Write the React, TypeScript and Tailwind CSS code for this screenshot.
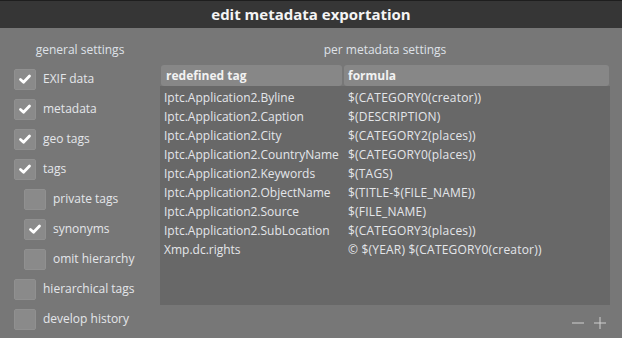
import React from "react";

const Check = () => (
  <svg width="14" height="12" viewBox="0 0 14 12">
    <polyline points="2.5,6.5 5.5,9.2 11.5,3" fill="none" stroke="#ffffff" strokeWidth="2.8" strokeLinecap="round" strokeLinejoin="round" />
  </svg>
);

const Row = ({ label, checked, indent }: { label: string; checked: boolean; indent?: boolean }) => (
  <div className={`h-[30px] flex items-center ${indent ? "pl-[24px]" : "pl-[14px]"}`}>
    <div className="w-[22px] h-[21px] rounded-[2px] bg-[#8a8a8a] border border-[#909090] flex items-center justify-center">
      {checked && <Check />}
    </div>
    <span className="ml-[7px] text-[12px] text-[#e4e6ea]">{label}</span>
  </div>
);

const rows: [string, string][] = [
  ["Iptc.Application2.Byline", "$(CATEGORY0(creator))"],
  ["Iptc.Application2.Caption", "$(DESCRIPTION)"],
  ["Iptc.Application2.City", "$(CATEGORY2(places))"],
  ["Iptc.Application2.CountryName", "$(CATEGORY0(places))"],
  ["Iptc.Application2.Keywords", "$(TAGS)"],
  ["Iptc.Application2.ObjectName", "$(TITLE-$(FILE_NAME))"],
  ["Iptc.Application2.Source", "$(FILE_NAME)"],
  ["Iptc.Application2.SubLocation", "$(CATEGORY3(places))"],
  ["Xmp.dc.rights", "© $(YEAR) $(CATEGORY0(creator))"],
];

export default function App() {
  return (
    <div
      className="w-[622px] h-[338px] bg-[#777777] flex flex-col overflow-hidden"
      style={{ fontFamily: '"Open Sans", "Noto Sans", sans-serif' }}
    >
      <div className="h-[28px] bg-[#363636] border-t border-[#1e1e1e] flex items-center justify-center">
        <span className="text-[15px] font-bold text-[#f4f4f4] leading-none">edit metadata exportation</span>
      </div>
      <div className="flex flex-1">
        <div className="w-[160px] flex flex-col pt-[13px]">
          <div className="h-[18px] flex items-center justify-center text-[12px] text-[#dfe2e8]">general settings</div>
          <div className="mt-[5px]">
            <Row label="EXIF data" checked />
            <Row label="metadata" checked />
            <Row label="geo tags" checked />
            <Row label="tags" checked />
            <Row label="private tags" checked={false} indent />
            <Row label="synonyms" checked indent />
            <Row label="omit hierarchy" checked={false} indent />
            <Row label="hierarchical tags" checked={false} />
            <Row label="develop history" checked={false} />
          </div>
        </div>
        <div className="w-[450px] flex flex-col pt-[13px]">
          <div className="h-[18px] flex items-center justify-center text-[12px] text-[#dfe2e8]">per metadata settings</div>
          <div className="mt-[6px] flex gap-[2px] pl-[1px] pr-[1px] h-[21px]">
            <div className="w-[181px] rounded-[3px] bg-[#878787] flex items-center pl-[5px] text-[12px] font-bold text-[#f2f2f2]">redefined tag</div>
            <div className="flex-1 rounded-[3px] bg-[#878787] flex items-center pl-[4px] text-[12px] font-bold text-[#f2f2f2]">formula</div>
          </div>
          <div className="h-[219px] bg-[#686868] pt-[2px]">
            {rows.map(([a, b]) => (
              <div key={a} className="h-[19px] flex items-center text-[12px] text-[#e4e6ea]">
                <div className="w-[184px] pl-[4px] whitespace-nowrap">{a}</div>
                <div className="flex-1 pl-[4px] whitespace-nowrap tracking-[0.2px]">{b}</div>
              </div>
            ))}
          </div>
          <div className="flex justify-end items-center gap-[10px] mt-[10px] pr-[4px] h-[16px]">
            <svg width="12" height="12" viewBox="0 0 12 12">
              <line x1="0" y1="6" x2="12" y2="6" stroke="#d0d0d0" strokeWidth="1" />
            </svg>
            <svg width="12" height="12" viewBox="0 0 12 12">
              <line x1="0" y1="6" x2="12" y2="6" stroke="#d0d0d0" strokeWidth="1" />
              <line x1="6" y1="0" x2="6" y2="12" stroke="#d0d0d0" strokeWidth="1" />
            </svg>
          </div>
        </div>
      </div>
    </div>
  );
}
